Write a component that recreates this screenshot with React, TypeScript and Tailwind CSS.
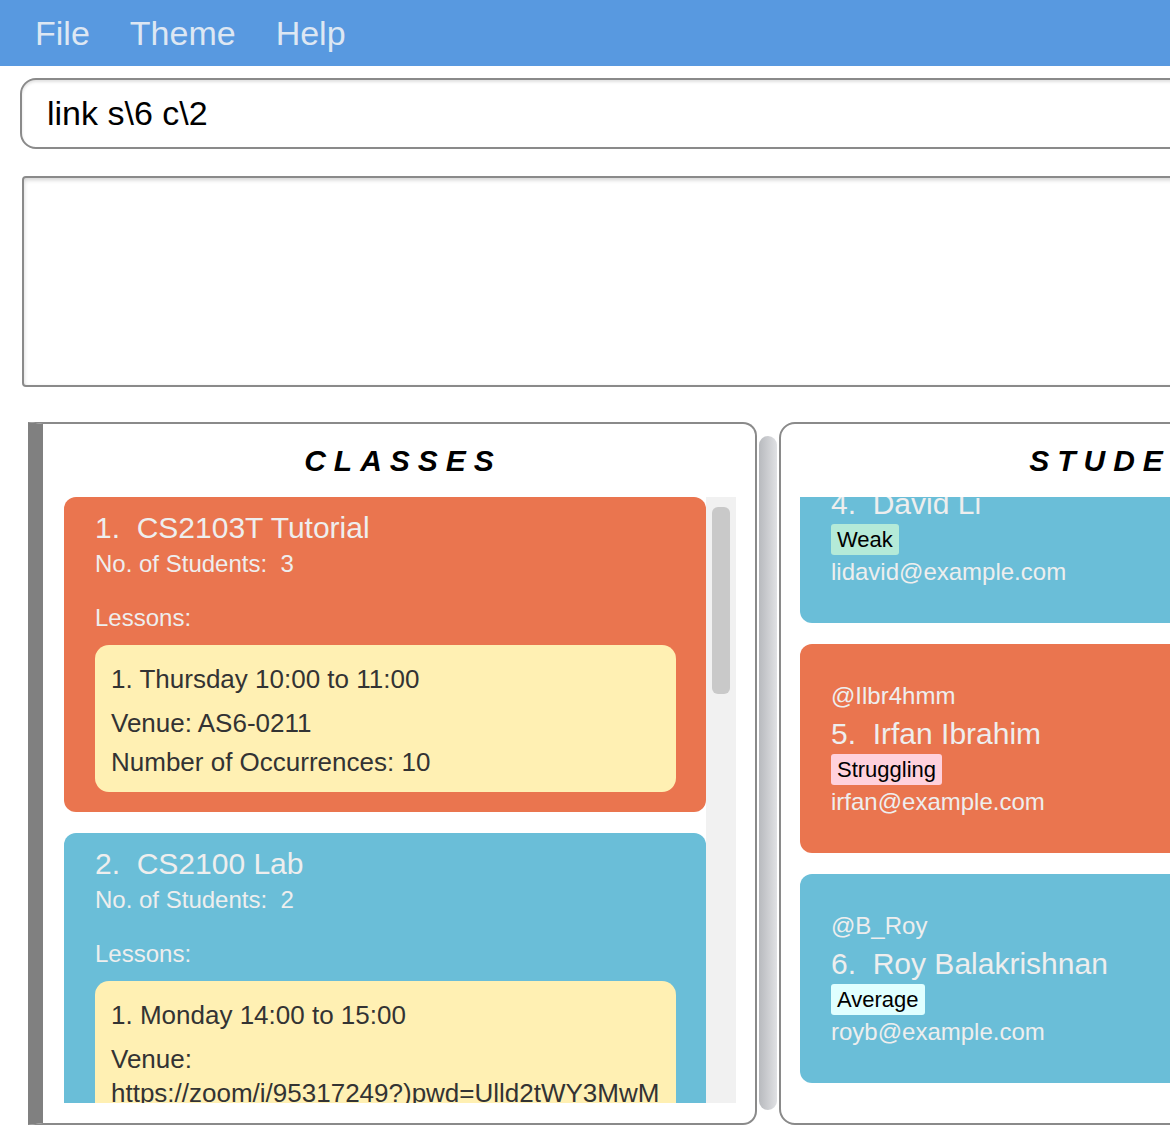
import React from "react";

type Lesson = { time: string; venue: string; count?: number };
type ClassItem = { name: string; students: number; color: string; lessons: Lesson[] };
type Student = { handle: string; name: string; tag: string; tagBg: string; email: string; color: string };

const classes: ClassItem[] = [
  {
    name: "CS2103T Tutorial",
    students: 3,
    color: "bg-[#ea754f]",
    lessons: [{ time: "Thursday 10:00 to 11:00", venue: "AS6-0211", count: 10 }],
  },
  {
    name: "CS2100 Lab",
    students: 2,
    color: "bg-[#6abed8]",
    lessons: [
      {
        time: "Monday 14:00 to 15:00",
        venue: "https://zoom/i/95317249?)pwd=Ulld2tWY3MwMkRibVN4RE1wUjVTdz09",
        count: 8,
      },
    ],
  },
];

const students: Student[] = [
  { handle: "@davidli", name: "David Li", tag: "Weak", tagBg: "bg-[#b4ead8]", email: "lidavid@example.com", color: "bg-[#6abed8]" },
  { handle: "@Ilbr4hmm", name: "Irfan Ibrahim", tag: "Struggling", tagBg: "bg-[#ffd1dc]", email: "irfan@example.com", color: "bg-[#ea754f]" },
  { handle: "@B_Roy", name: "Roy Balakrishnan", tag: "Average", tagBg: "bg-[#e0ffff]", email: "royb@example.com", color: "bg-[#6abed8]" },
];

function PanelTitle({ text }: { text: string }) {
  return (
    <div className="h-[73px] shrink-0 flex items-center justify-center pl-[8px]">
      <span className="text-[30px] font-bold italic tracking-[8px] text-black leading-none">{text}</span>
    </div>
  );
}

function ClassCard({ item, index }: { item: ClassItem; index: number }) {
  return (
    <div className={`${item.color} w-[642px] shrink-0 rounded-[12px] pl-[31px] pt-[14px] pb-[20px] text-[#eeeeee]`}>
      <div className="text-[30px] leading-[34px] whitespace-pre">{`${index + 1}.  ${item.name}`}</div>
      <div className="mt-[5px] text-[24px] leading-[28px] whitespace-pre">{`No. of Students:  ${item.students}`}</div>
      <div className="mt-[26px] text-[24px] leading-[28px]">Lessons:</div>
      {item.lessons.map((lesson, i) => (
        <div
          key={i}
          className="mt-[13px] mr-[30px] rounded-[14px] bg-[#fff0b3] pl-[16px] pr-[16px] pt-[17px] pb-[13px] text-[26px] leading-[34px] text-[#333333]"
        >
          <div>
            {i + 1}. {lesson.time}
          </div>
          <div className="mt-[10px] break-words">Venue: {lesson.venue}</div>
          {lesson.count !== undefined && <div className="mt-[5px]">Number of Occurrences: {lesson.count}</div>}
        </div>
      ))}
    </div>
  );
}

function StudentCard({ s, num }: { s: Student; num: number }) {
  return (
    <div className={`${s.color} w-[642px] h-[209px] shrink-0 rounded-[12px] pl-[31px] pt-[38px] text-[#eeeeee]`}>
      <div className="text-[24px] leading-[28px]">{s.handle}</div>
      <div className="mt-[7px] text-[30px] leading-[34px] whitespace-pre">{`${num}.  ${s.name}`}</div>
      <div className="mt-[3px] flex">
        <span className={`${s.tagBg} rounded-[3px] px-[6px] h-[31px] flex items-center text-[22px] text-black`}>{s.tag}</span>
      </div>
      <div className="mt-[3px] text-[24px] leading-[28px]">{s.email}</div>
    </div>
  );
}

export default function App() {
  return (
    <div className="w-[1170px] h-[1142px] overflow-hidden bg-white font-['Liberation_Sans',Arial,sans-serif]">
      <div className="w-[1520px]">
        {/* Menu bar */}
        <div className="h-[66px] bg-[#5899e0] flex items-center pl-[15px]">
          {["File", "Theme", "Help"].map((m) => (
            <span key={m} className="px-[20px] text-[34px] text-[#dde7f3]">
              {m}
            </span>
          ))}
        </div>

        {/* Command box */}
        <div className="pt-[12px] pl-[20px]">
          <div className="h-[71px] w-[1480px] rounded-[16px] border-2 border-[#8a8a8a] bg-white flex items-center pl-[25px] text-[34px] text-black shadow-[inset_0_2px_3px_rgba(0,0,0,0.12)]">
            link s\6 c\2
          </div>
        </div>

        {/* Result display */}
        <div className="mt-[27px] ml-[22px] h-[211px] w-[1478px] rounded-[4px] border-2 border-[#8a8a8a] bg-white shadow-[inset_0_2px_4px_rgba(0,0,0,0.18)]" />

        {/* Panels */}
        <div className="mt-[35px] ml-[28px] flex h-[703px]">
          {/* Classes panel */}
          <div className="w-[729px] shrink-0 h-full flex flex-col border-t-2 border-r-2 border-b-2 border-l-[15px] border-[#8a8a8a] border-l-[#808080] rounded-r-[14px] bg-white">
            <PanelTitle text="CLASSES" />
            <div className="ml-[21px] mr-[19px] h-[606px] flex">
              <div className="flex-1 overflow-hidden flex flex-col gap-[21px]">
                {classes.map((c, i) => (
                  <ClassCard key={c.name} item={c} index={i} />
                ))}
              </div>
              <div className="w-[30px] shrink-0 bg-[#f1f1f1] px-[6px] pt-[10px]">
                <div className="h-[187px] rounded-[6px] bg-[#c9c9c9]" />
              </div>
            </div>
          </div>

          {/* Splitter */}
          <div className="ml-[2px] mt-[14px] w-[18px] h-[674px] shrink-0 rounded-full bg-gradient-to-r from-[#b8babe] to-[#e0e1e4]" />

          {/* Students panel */}
          <div className="ml-[2px] w-[718px] shrink-0 h-full flex flex-col border-2 border-[#8a8a8a] rounded-l-[16px] bg-white">
            <PanelTitle text="STUDENTS" />
            <div className="ml-[19px] h-[606px] overflow-hidden">
              <div className="-mt-[83px] flex flex-col gap-[21px]">
                {students.map((s, i) => (
                  <StudentCard key={s.email} s={s} num={i + 4} />
                ))}
              </div>
            </div>
          </div>
        </div>
      </div>
    </div>
  );
}
